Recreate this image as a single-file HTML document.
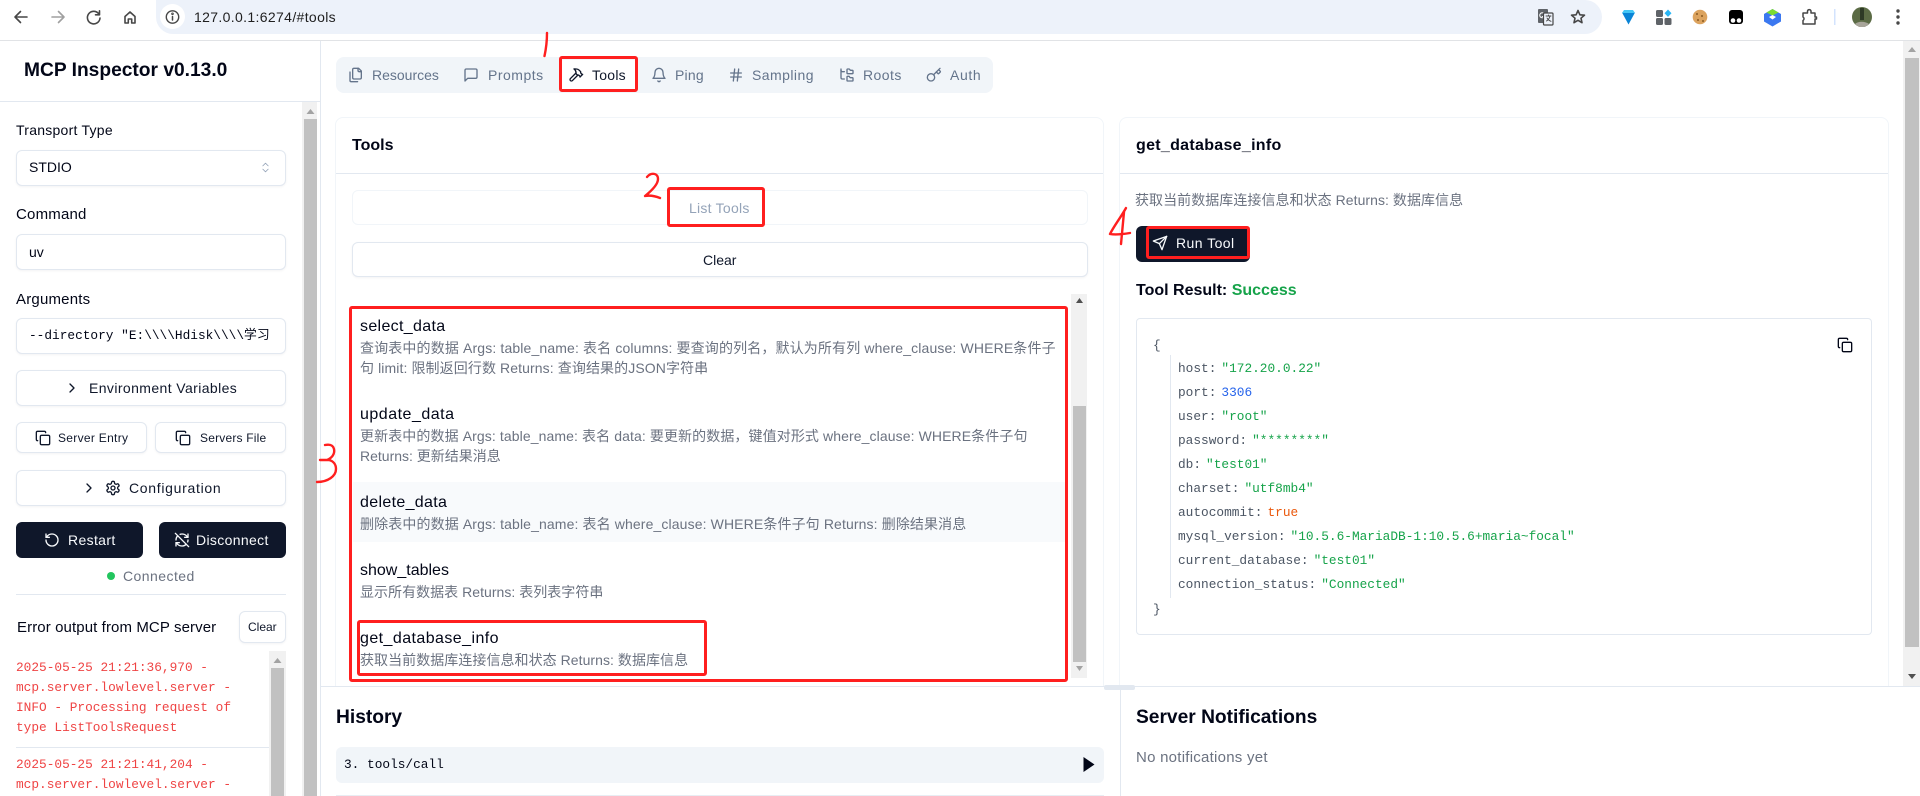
<!DOCTYPE html>
<html lang="zh-CN"><head><meta charset="utf-8"><title>MCP Inspector</title>
<style>
html,body{margin:0;padding:0;width:1920px;height:796px;overflow:hidden;background:#fff}
body{position:relative;font-family:"Liberation Sans","Noto Sans CJK SC",sans-serif;font-size:14px;color:#020617}
.a,.t,.m,.b{position:absolute;box-sizing:border-box}
.t,.m{white-space:nowrap;line-height:20px}
.m{font-family:"Liberation Mono","Noto Sans CJK SC",monospace;font-size:12.8px}
.b{background:#fff;border:1px solid #e2e8f0;border-radius:6px;box-shadow:0 1px 2px rgba(15,23,42,.05)}
.dk{background:#0f172a;border-radius:6px;color:#f8fafc}
svg.i{position:absolute;fill:none;stroke:currentColor;stroke-width:2;stroke-linecap:round;stroke-linejoin:round}
.d{color:#6b7280}
.g{color:#16a34a}.k{color:#4b5563}
.r{position:absolute;box-sizing:border-box;border:3px solid #ff1f1f;border-radius:3px}
</style></head><body>
<svg width="0" height="0" style="position:absolute"><defs>
<symbol id="files" viewBox="0 0 24 24"><path d="M20 7h-3a2 2 0 0 1-2-2V2"/><path d="M9 18a2 2 0 0 1-2-2V4a2 2 0 0 1 2-2h7l4 4v10a2 2 0 0 1-2 2Z"/><path d="M3 7.6v12.8A1.6 1.6 0 0 0 4.6 22h9.8"/></symbol>
<symbol id="msg" viewBox="0 0 24 24"><path d="M21 15a2 2 0 0 1-2 2H7l-4 4V5a2 2 0 0 1 2-2h14a2 2 0 0 1 2 2z"/></symbol>
<symbol id="hammer" viewBox="0 0 24 24"><path d="m15 12-8.373 8.373a1 1 0 1 1-3-3L12 9"/><path d="m18 15 4-4"/><path d="m21.5 11.5-1.914-1.914A2 2 0 0 1 19 8.172V7l-2.26-2.26a6 6 0 0 0-4.202-1.756L9 2.96l.92.82A6.18 6.18 0 0 1 12 8.4V10l2 2h1.172a2 2 0 0 1 1.414.586L18.5 14.5"/></symbol>
<symbol id="bell" viewBox="0 0 24 24"><path d="M6 8a6 6 0 0 1 12 0c0 7 3 9 3 9H3s3-2 3-9"/><path d="M10.3 21a1.94 1.94 0 0 0 3.4 0"/></symbol>
<symbol id="hash" viewBox="0 0 24 24"><path d="M4 9h16M4 15h16M10 3 8 21M16 3l-2 18"/></symbol>
<symbol id="tree" viewBox="0 0 24 24"><path d="M20 10a1 1 0 0 0 1-1V6a1 1 0 0 0-1-1h-2.5a1 1 0 0 1-.8-.4l-.9-1.2A1 1 0 0 0 15 3h-2a1 1 0 0 0-1 1v5a1 1 0 0 0 1 1Z"/><path d="M20 21a1 1 0 0 0 1-1v-3a1 1 0 0 0-1-1h-2.9a1 1 0 0 1-.88-.55l-.42-.85a1 1 0 0 0-.92-.6H13a1 1 0 0 0-1 1v5a1 1 0 0 0 1 1Z"/><path d="M3 5a2 2 0 0 0 2 2h3"/><path d="M3 3v13a2 2 0 0 0 2 2h3"/></symbol>
<symbol id="key" viewBox="0 0 24 24"><path d="m15.5 7.5 2.3 2.3a1 1 0 0 0 1.4 0l2.1-2.1a1 1 0 0 0 0-1.4L19 4"/><path d="m21 2-9.6 9.6"/><circle cx="7.5" cy="15.5" r="5.5"/></symbol>
<symbol id="copy" viewBox="0 0 24 24"><rect width="14" height="14" x="8" y="8" rx="2" ry="2"/><path d="M4 16c-1.1 0-2-.9-2-2V4c0-1.1.9-2 2-2h10c1.1 0 2 .9 2 2"/></symbol>
<symbol id="send" viewBox="0 0 24 24"><path d="m22 2-7 20-4-9-9-4Z"/><path d="M22 2 11 13"/></symbol>
<symbol id="rot" viewBox="0 0 24 24"><path d="M3 12a9 9 0 1 0 9-9 9.75 9.75 0 0 0-6.74 2.74L3 8"/><path d="M3 3v5h5"/></symbol>
<symbol id="off" viewBox="0 0 24 24"><path d="M21 8 18.74 5.74A9.75 9.75 0 0 0 12 3c-1 0-1.97.16-2.87.47"/><path d="M8 16H3v5"/><path d="M3 12c0-2.49 1-4.74 2.64-6.36"/><path d="m3 16 2.26 2.26A9.75 9.75 0 0 0 12 21c2.49 0 4.74-1 6.36-2.64"/><path d="M21 12c0 1-.16 1.97-.47 2.87"/><path d="M21 3v5h-5"/><path d="M22 22 2 2"/></symbol>
<symbol id="gear" viewBox="0 0 24 24"><path d="M12.22 2h-.44a2 2 0 0 0-2 2v.18a2 2 0 0 1-1 1.73l-.43.25a2 2 0 0 1-2 0l-.15-.08a2 2 0 0 0-2.73.73l-.22.38a2 2 0 0 0 .73 2.73l.15.1a2 2 0 0 1 1 1.72v.51a2 2 0 0 1-1 1.74l-.15.09a2 2 0 0 0-.73 2.73l.22.38a2 2 0 0 0 2.73.73l.15-.08a2 2 0 0 1 2 0l.43.25a2 2 0 0 1 1 1.73V20a2 2 0 0 0 2 2h.44a2 2 0 0 0 2-2v-.18a2 2 0 0 1 1-1.73l.43-.25a2 2 0 0 1 2 0l.15.08a2 2 0 0 0 2.73-.73l.22-.39a2 2 0 0 0-.73-2.73l-.15-.08a2 2 0 0 1-1-1.74v-.5a2 2 0 0 1 1-1.74l.15-.09a2 2 0 0 0 .73-2.73l-.22-.38a2 2 0 0 0-2.73-.73l-.15.08a2 2 0 0 1-2 0l-.43-.25a2 2 0 0 1-1-1.73V4a2 2 0 0 0-2-2z"/><circle cx="12" cy="12" r="3"/></symbol>
<symbol id="chev" viewBox="0 0 24 24"><path d="m9 18 6-6-6-6"/></symbol>
</defs></svg>

<!-- browser chrome -->
<div class="a" style="left:0;top:0;width:1920px;height:40px;background:#fff"></div>
<div class="a" style="left:156px;top:0;width:1446px;height:34px;background:#edf2fa;border-radius:0 17px 17px 17px"></div>
<div class="a" style="left:160px;top:4px;width:25px;height:25px;background:#fff;border-radius:50%"></div>
<div class="a" style="left:0;top:40px;width:1920px;height:1px;background:#e1e3e6"></div>
<svg class="a" style="left:0;top:0" width="1920" height="40" fill="none" stroke="#474747" stroke-width="1.6" stroke-linecap="round" stroke-linejoin="round">
<path d="M27 17H15.5M20.500 11.500 15 17l5.500 5.500"/>
<path d="M52 17h11.500M58.500 11.500 64 17l-5.500 5.500" stroke="#a0a0a0"/>
<path d="M98.500 13.500A6.300 6.300 0 1 0 100 18M99.500 10.800v4h-4"/>
<path d="M125 16.500 130 12l5 4.500V23h-3.300v-4h-3.400v4H125z"/>
<circle cx="172.500" cy="17" r="6.200" stroke-width="1.400"/><path d="M172.500 16.500v3.500" stroke-width="1.500"/><circle cx="172.500" cy="13.800" r=".5"/>
<path d="M1578 10.500l1.900 4.300 4.600.4-3.500 3 1 4.500-4-2.400-4 2.400 1-4.500-3.500-3 4.600-.4z"/>
<rect x="1538" y="9" width="10" height="14" rx="1" fill="#5f6368" stroke="none"/><path d="M1544 13.500a2.500 2.500 0 1 0 .4 3h-2.200" stroke="#fff" stroke-width="1"/><rect x="1543.500" y="13" width="9.500" height="12" rx="1" fill="#edf2fa" stroke-width="1.200"/><path d="M1546 16h5M1548.500 15v1M1550 16c-.5 2.500-2 4-3.500 5M1547 18c1 1.500 2.500 2.800 4 3.300" stroke-width=".9"/>
<path d="M1622 12.500h13l-6.500 12z" fill="#0a84d6" stroke="none"/><path d="M1624 10h9l2 3h-13z" fill="#43c6f5" stroke="none"/>
<g stroke="none"><rect x="1656" y="10" width="7" height="7" rx="1.500" fill="#5f6368"/><rect x="1656" y="18" width="7" height="7" rx="1.500" fill="#5f6368"/><rect x="1664.500" y="18" width="7" height="7" rx="1.500" fill="#5f6368"/><path d="M1668 9.500l3.500 3.700-3.500 3.700-3.500-3.700z" fill="#29b6f6"/>
<circle cx="1700" cy="17" r="7.300" fill="#dca35e"/><circle cx="1697" cy="14" r="1" fill="#8a5a22"/><circle cx="1702" cy="16" r="1" fill="#8a5a22"/><circle cx="1698" cy="20" r="1" fill="#8a5a22"/><circle cx="1703" cy="21" r="1" fill="#8a5a22"/>
<rect x="1729" y="10" width="14" height="14" rx="3" fill="#000"/><circle cx="1733" cy="20.500" r="2.300" fill="#fff"/><circle cx="1739" cy="20.500" r="2.300" fill="#fff"/>
<path d="M1772.500 9l8.500 5v7.500l-8.500 5-8.500-5V14z" fill="#3b78f0"/><path d="M1772.500 9l6 3.500-6 3-6-3z" fill="#7bdc2f"/><path d="M1772.500 15l3.500 2-3.500 2.500-3.500-2.500z" fill="#fff"/>
<rect x="1834" y="9" width="1.500" height="16" fill="#d3e3fd"/>
<circle cx="1862" cy="17" r="10" fill="#5b6b45"/><path d="M1855 24c3-3 10-3 14 0l-4 3h-6z" fill="#a8a59a"/><rect x="1860" y="8" width="4" height="12" fill="#2e3a26"/>
<circle cx="1898" cy="11" r="1.700" fill="#474747"/><circle cx="1898" cy="17" r="1.700" fill="#474747"/><circle cx="1898" cy="23" r="1.700" fill="#474747"/></g>
<path d="M1803 13h4.500v-2a1.800 1.800 0 0 1 3.500 0v2h4v4h1.500v2H1815v5h-12v-3.500a2 2 0 0 0 0-3.500z" stroke-width="1.500"/>
</svg>
<div class="t" style="left:194px;top:7px;font-size:14px;letter-spacing:.35px;color:#1f1f1f">127.0.0.1:6274/#tools</div>

<!-- sidebar -->
<div class="a" style="left:320px;top:41px;width:1px;height:755px;background:#e2e8f0"></div>
<div class="t" style="left:24px;top:61px;font-size:19.2px;font-weight:700;color:#020617">MCP Inspector v0.13.0</div>
<div class="a" style="left:0;top:101px;width:320px;height:1px;background:#e2e8f0"></div>
<div class="a" style="left:302px;top:102px;width:15px;height:694px;background:#f1f1f1"></div>
<div class="a" style="left:304px;top:119px;width:13px;height:677px;background:#c1c1c1"></div>
<svg class="a" style="left:304px;top:108px" width="13" height="8"><path d="M2.500 6h8l-4-5z" fill="#a3a3a3"/></svg>

<div class="t" style="left:16px;top:120px;letter-spacing:.25px">Transport Type</div>
<div class="b" style="left:16px;top:150px;width:270px;height:36px"></div>
<div class="t" style="left:29px;top:157px">STDIO</div>
<svg class="i" style="left:259px;top:161px;color:#94a3b8;stroke-width:1.5" width="13" height="13" viewBox="0 0 24 24"><path d="m7 15 5 5 5-5M7 9l5-5 5 5"/></svg>
<div class="t" style="left:16px;top:205px;font-size:15px;letter-spacing:.2px">Command</div>
<div class="b" style="left:16px;top:234px;width:270px;height:36px"></div>
<div class="t" style="left:29px;top:242px">uv</div>
<div class="t" style="left:16px;top:290px;font-size:15px;letter-spacing:.2px">Arguments</div>
<div class="b" style="left:16px;top:318px;width:270px;height:36px"></div>
<div class="m" style="left:29px;top:326px;width:244px;overflow:hidden">--directory "E:\\\\Hdisk\\\\学习</div>
<div class="b" style="left:16px;top:370px;width:270px;height:36px"></div>
<svg class="i" style="left:64px;top:380px;color:#0f172a" width="16" height="16"><use href="#chev"/></svg>
<div class="t" style="left:89px;top:378px;letter-spacing:.4px;color:#0f172a">Environment Variables</div>
<div class="b" style="left:16px;top:422px;width:131px;height:31px"></div>
<svg class="i" style="left:35px;top:430px;color:#0f172a" width="16" height="16"><use href="#copy"/></svg>
<div class="t" style="left:58px;top:428px;font-size:12px;letter-spacing:.3px;color:#0f172a">Server Entry</div>
<div class="b" style="left:155px;top:422px;width:131px;height:31px"></div>
<svg class="i" style="left:175px;top:430px;color:#0f172a" width="16" height="16"><use href="#copy"/></svg>
<div class="t" style="left:200px;top:428px;font-size:12px;letter-spacing:.2px;color:#0f172a">Servers File</div>
<div class="b" style="left:16px;top:470px;width:270px;height:36px"></div>
<svg class="i" style="left:81px;top:480px;color:#0f172a" width="16" height="16"><use href="#chev"/></svg>
<svg class="i" style="left:105px;top:480px;color:#0f172a" width="16" height="16"><use href="#gear"/></svg>
<div class="t" style="left:129px;top:478px;letter-spacing:.7px;color:#0f172a">Configuration</div>
<div class="a dk" style="left:16px;top:522px;width:127px;height:36px"></div>
<svg class="i" style="left:44px;top:532px;color:#f8fafc" width="16" height="16"><use href="#rot"/></svg>
<div class="t" style="left:68px;top:530px;letter-spacing:.35px;color:#f8fafc">Restart</div>
<div class="a dk" style="left:159px;top:522px;width:127px;height:36px"></div>
<svg class="i" style="left:174px;top:532px;color:#f8fafc" width="16" height="16"><use href="#off"/></svg>
<div class="t" style="left:196px;top:530px;letter-spacing:.35px;color:#f8fafc">Disconnect</div>
<div class="a" style="left:107px;top:572px;width:8px;height:8px;border-radius:50%;background:#22c55e"></div>
<div class="t" style="left:123px;top:566px;letter-spacing:.45px;color:#6b7280">Connected</div>
<div class="a" style="left:16px;top:594px;width:270px;height:1px;background:#e2e8f0"></div>
<div class="t" style="left:17px;top:618px;font-size:15px;letter-spacing:.1px">Error output from MCP server</div>
<div class="b" style="left:239px;top:611px;width:47px;height:32px"></div>
<div class="t" style="left:248px;top:617px;font-size:12px;color:#0f172a">Clear</div>
<div class="a" style="left:269px;top:651px;width:17px;height:145px;background:#f1f1f1"></div>
<div class="a" style="left:271px;top:668px;width:13px;height:128px;background:#c1c1c1"></div>
<svg class="a" style="left:271px;top:657px" width="13" height="8"><path d="M2.500 6h8l-4-5z" fill="#a3a3a3"/></svg>
<div class="m" style="left:16px;top:658px;color:#ef4444">2025-05-25 21:21:36,970 -<br>mcp.server.lowlevel.server -<br>INFO - Processing request of<br>type ListToolsRequest</div>
<div class="a" style="left:16px;top:747px;width:253px;height:1px;background:#e2e8f0"></div>
<div class="m" style="left:16px;top:755px;color:#ef4444">2025-05-25 21:21:41,204 -<br>mcp.server.lowlevel.server -</div>

<!-- tabs -->
<div class="a" style="left:336px;top:57px;width:657px;height:36px;background:#f1f5f9;border-radius:8px"></div>
<div class="a" style="left:560px;top:60px;width:77px;height:30px;background:#fff;border-radius:4px"></div>
<svg class="i" style="left:348px;top:67px;color:#64748b" width="16" height="16"><use href="#files"/></svg>
<div class="t" style="left:372px;top:65px;color:#64748b">Resources</div>
<svg class="i" style="left:463px;top:67px;color:#64748b" width="16" height="16"><use href="#msg"/></svg>
<div class="t" style="left:488px;top:65px;letter-spacing:.5px;color:#64748b">Prompts</div>
<svg class="i" style="left:568px;top:67px;color:#0f172a" width="16" height="16"><use href="#hammer"/></svg>
<div class="t" style="left:592px;top:65px;letter-spacing:.25px;color:#0f172a">Tools</div>
<svg class="i" style="left:651px;top:67px;color:#64748b" width="16" height="16"><use href="#bell"/></svg>
<div class="t" style="left:675px;top:65px;letter-spacing:.2px;color:#64748b">Ping</div>
<svg class="i" style="left:728px;top:67px;color:#64748b" width="16" height="16"><use href="#hash"/></svg>
<div class="t" style="left:752px;top:65px;letter-spacing:.45px;color:#64748b">Sampling</div>
<svg class="i" style="left:839px;top:67px;color:#64748b" width="16" height="16"><use href="#tree"/></svg>
<div class="t" style="left:863px;top:65px;letter-spacing:.45px;color:#64748b">Roots</div>
<svg class="i" style="left:926px;top:67px;color:#64748b" width="16" height="16"><use href="#key"/></svg>
<div class="t" style="left:950px;top:65px;letter-spacing:.6px;color:#64748b">Auth</div>

<!-- page scrollbar -->
<div class="a" style="left:1903px;top:41px;width:17px;height:645px;background:#f1f1f1"></div>
<div class="a" style="left:1905px;top:58px;width:14px;height:589px;background:#c1c1c1"></div>
<svg class="a" style="left:1905px;top:46px" width="14" height="8"><path d="M3 6h8L7 1z" fill="#a3a3a3"/></svg>
<svg class="a" style="left:1905px;top:673px" width="14" height="8"><path d="M3 1h8L7 6z" fill="#505050"/></svg>

<!-- left card -->
<div class="a" style="left:335px;top:117px;width:769px;height:580px;border:1px solid #f1f5f9;border-radius:8px"></div>
<div class="a" style="left:336px;top:173px;width:767px;height:1px;background:#e2e8f0"></div>
<div class="t" style="left:352px;top:136px;font-size:16px;font-weight:700">Tools</div>
<div class="b" style="left:352px;top:190px;width:736px;height:35px;border-color:#f1f5f9;box-shadow:none"></div>
<div class="t" style="left:689px;top:198px;letter-spacing:.25px;color:#94a3b8">List Tools</div>
<div class="b" style="left:352px;top:242px;width:736px;height:35px"></div>
<div class="t" style="left:703px;top:250px;color:#0f172a">Clear</div>

<div class="a" style="left:1071px;top:294px;width:16px;height:384px;background:#f1f1f1"></div>
<div class="a" style="left:1073px;top:406px;width:13px;height:256px;background:#c1c1c1"></div>
<svg class="a" style="left:1073px;top:297px" width="13" height="8"><path d="M3 6h7L6.500 1z" fill="#505050"/></svg>
<svg class="a" style="left:1073px;top:665px" width="13" height="8"><path d="M3 1h7L6.500 6z" fill="#a3a3a3"/></svg>
<div class="a" style="left:353px;top:482px;width:714px;height:60px;background:#f8fafc"></div>

<div class="t" style="left:360px;top:317px;font-size:16px;letter-spacing:.33px">select_data</div>
<div class="t d" style="left:360px;top:338px;letter-spacing:.14px">查询表中的数据 Args: table_name: 表名 columns: 要查询的列名，默认为所有列 where_clause: WHERE条件子</div>
<div class="t d" style="left:360px;top:358px;letter-spacing:.1px">句 limit: 限制返回行数 Returns: 查询结果的JSON字符串</div>
<div class="t" style="left:360px;top:405px;font-size:16px;letter-spacing:.5px">update_data</div>
<div class="t d" style="left:360px;top:426px;letter-spacing:.1px">更新表中的数据 Args: table_name: 表名 data: 要更新的数据，键值对形式 where_clause: WHERE条件子句</div>
<div class="t d" style="left:360px;top:446px">Returns: 更新结果消息</div>
<div class="t" style="left:360px;top:493px;font-size:16px;letter-spacing:.33px">delete_data</div>
<div class="t d" style="left:360px;top:514px;letter-spacing:.12px">删除表中的数据 Args: table_name: 表名 where_clause: WHERE条件子句 Returns: 删除结果消息</div>
<div class="t" style="left:360px;top:561px;font-size:16px">show_tables</div>
<div class="t d" style="left:360px;top:582px;letter-spacing:.03px">显示所有数据表 Returns: 表列表字符串</div>
<div class="t" style="left:360px;top:629px;font-size:16px;letter-spacing:.43px">get_database_info</div>
<div class="t d" style="left:360px;top:650px;letter-spacing:.05px">获取当前数据库连接信息和状态 Returns: 数据库信息</div>

<!-- right card -->
<div class="a" style="left:1119px;top:117px;width:770px;height:580px;border:1px solid #f1f5f9;border-radius:8px"></div>
<div class="a" style="left:1120px;top:173px;width:768px;height:1px;background:#e2e8f0"></div>
<div class="t" style="left:1136px;top:136px;font-size:16px;font-weight:700;letter-spacing:.3px">get_database_info</div>
<div class="t d" style="left:1135px;top:190px;letter-spacing:.05px">获取当前数据库连接信息和状态 Returns: 数据库信息</div>
<div class="a dk" style="left:1136px;top:226px;width:114px;height:36px"></div>
<svg class="i" style="left:1152px;top:235px;color:#f8fafc" width="16" height="16"><use href="#send"/></svg>
<div class="t" style="left:1176px;top:233px;letter-spacing:.45px;color:#f8fafc">Run Tool</div>
<div class="t" style="left:1136px;top:281px;font-size:16px;font-weight:700">Tool Result: <span style="color:#16a34a">Success</span></div>
<div class="a" style="left:1136px;top:318px;width:736px;height:317px;border:1px solid #e2e8f0;border-radius:4px;background:#fff"></div>
<svg class="i" style="left:1837px;top:337px;color:#020617" width="16" height="16"><use href="#copy"/></svg>
<div class="a" style="left:1170px;top:355px;width:1px;height:243px;background:#e2e8f0"></div>
<div class="m k" style="left:1153px;top:336px">{</div>
<div class="m k" style="left:1178px;top:359px">host:<span class="g" style="margin-left:5px">"172.20.0.22"</span></div>
<div class="m k" style="left:1178px;top:383px">port:<span style="margin-left:5px;color:#2563eb">3306</span></div>
<div class="m k" style="left:1178px;top:407px">user:<span class="g" style="margin-left:5px">"root"</span></div>
<div class="m k" style="left:1178px;top:431px">password:<span class="g" style="margin-left:5px">"********"</span></div>
<div class="m k" style="left:1178px;top:455px">db:<span class="g" style="margin-left:5px">"test01"</span></div>
<div class="m k" style="left:1178px;top:479px">charset:<span class="g" style="margin-left:5px">"utf8mb4"</span></div>
<div class="m k" style="left:1178px;top:503px">autocommit:<span style="margin-left:5px;color:#ea580c">true</span></div>
<div class="m k" style="left:1178px;top:527px">mysql_version:<span class="g" style="margin-left:5px">"10.5.6-MariaDB-1:10.5.6+maria~focal"</span></div>
<div class="m k" style="left:1178px;top:551px">current_database:<span class="g" style="margin-left:5px">"test01"</span></div>
<div class="m k" style="left:1178px;top:575px">connection_status:<span class="g" style="margin-left:5px">"Connected"</span></div>
<div class="m k" style="left:1153px;top:600px">}</div>

<!-- bottom panels -->
<div class="a" style="left:321px;top:686px;width:1599px;height:110px;background:#fff;border-top:1px solid #e2e8f0"></div>
<div class="a" style="left:1104px;top:685px;width:31px;height:5px;background:#e2e8f0;border-radius:2px"></div>
<div class="a" style="left:1120px;top:687px;width:1px;height:109px;background:#e2e8f0"></div>
<div class="t" style="left:336px;top:708px;font-size:19.2px;font-weight:700">History</div>
<div class="a" style="left:336px;top:747px;width:768px;height:36px;background:#f1f5f9;border-radius:6px"></div>
<div class="m" style="left:344px;top:755px;color:#020617">3. tools/call</div>
<svg class="a" style="left:1082px;top:756px" width="13" height="17"><path d="M1.500 1v15l11-7.500z" fill="#020617"/></svg>
<div class="a" style="left:336px;top:795px;width:768px;height:1px;background:#e8edf3"></div>
<div class="t" style="left:1136px;top:708px;font-size:19.2px;font-weight:700">Server Notifications</div>
<div class="t d" style="left:1136px;top:748px;font-size:15px;letter-spacing:.25px">No notifications yet</div>

<!-- red annotations -->
<div class="r" style="left:559px;top:56px;width:79px;height:36px"></div>
<div class="r" style="left:667px;top:187px;width:98px;height:40px"></div>
<div class="r" style="left:349px;top:306px;width:719px;height:376px"></div>
<div class="r" style="left:357px;top:620px;width:350px;height:56px"></div>
<div class="r" style="left:1146px;top:226px;width:104px;height:33px"></div>
<svg class="a" style="left:0;top:0" width="1920" height="796" fill="none" stroke="#ff1f1f" stroke-width="2.4" stroke-linecap="round" stroke-linejoin="round">
<path d="M547 33c0 8-1 16-2.500 23"/>
<path d="M647 177c4-5 11-4 11 2 0 6-8 13-13 17 5-1 10 0 15 2"/>
<path d="M325 445c5-1 8 0 9 4 1 5-2 9-7 11h-7 9c4 1 7 4 7 9 0 7-8 13-19 13"/>
<path d="M1126 208c-5 9-12 18-16 26 6 1 14 0 20-1M1124 212c-1 11-2 22-3 32"/>
</svg>
</body></html>
